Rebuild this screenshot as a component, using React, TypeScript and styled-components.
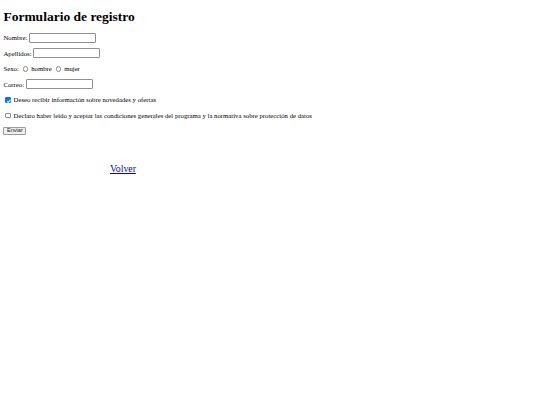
import styled, { createGlobalStyle } from "styled-components";

const GlobalStyle = createGlobalStyle`
  body {
    margin: 0;
    padding: 9px 3.4px;
    font-family: "Liberation Serif", "Times New Roman", serif;
    font-size: 6.75px;
    color: #000;
    background: #fff;
  }
`;

const Title = styled.h1`
  margin: 0 0 9px;
  font-size: 13.5px;
  line-height: 15.6px;
  font-weight: bold;
`;

const Form = styled.form`
  margin: 0;
`;

const Row = styled.div`
  display: flex;
  align-items: center;
  height: 8.75px;
  margin: 0 0 6.75px;
  white-space: pre;
`;

const TextInput = styled.input`
  box-sizing: border-box;
  width: 67px;
  height: 10px;
  margin: 0;
  padding: 0 1px;
  border: 1px solid #8f8f8f;
  border-radius: 1px;
  background: #fff;
  font: 5.6px "Liberation Sans", Arial, sans-serif;
`;

const Radio = styled.input`
  appearance: none;
  box-sizing: border-box;
  flex: none;
  width: 5.6px;
  height: 5.6px;
  margin: 0 1.3px 0 2.1px;
  border: 0.6px solid #8a8a8a;
  border-radius: 50%;
  background: #fff;

  &:checked {
    border: 1.6px solid #0075ff;
  }
`;

const Check = styled.input`
  appearance: none;
  position: relative;
  box-sizing: border-box;
  flex: none;
  width: 5.5px;
  height: 5.5px;
  margin: 0 1.3px 0 1.7px;
  border: 0.6px solid #8a8a8a;
  border-radius: 1px;
  background: #fff;

  &:checked {
    border-color: #0075ff;
    background: #0075ff;
  }

  &:checked::after {
    content: "";
    position: absolute;
    left: 1.5px;
    top: 0.3px;
    width: 1.3px;
    height: 2.6px;
    border: solid #fff;
    border-width: 0 0.9px 0.9px 0;
    transform: rotate(45deg);
  }
`;

const Button = styled.button`
  box-sizing: border-box;
  height: 8.5px;
  padding: 0 2.6px;
  border: 0.8px solid #9a9a9a;
  border-radius: 1px;
  background: #efefef;
  color: #222;
  font: 5.6px/1 "Liberation Sans", Arial, sans-serif;
`;

const Back = styled.div`
  margin-top: 27.5px;
  padding-left: 106.6px;
`;

const BackLink = styled.a`
  font-size: 9.8px;
  line-height: 11.5px;
  color: #0000ee;
`;

export default function App() {
  return (
    <>
      <GlobalStyle />
      <Title>Formulario de registro</Title>
      <Form onSubmit={(e) => e.preventDefault()}>
        <Row>
          {"Nombre: "}
          <TextInput type="text" name="nombre" />
        </Row>
        <Row>
          {"Apellidos: "}
          <TextInput type="text" name="apellidos" />
        </Row>
        <Row>
          {"Sexo: "}
          <Radio type="radio" name="sexo" value="hombre" />
          {" hombre "}
          <Radio type="radio" name="sexo" value="mujer" />
          {" mujer"}
        </Row>
        <Row>
          {"Correo: "}
          <TextInput type="email" name="correo" />
        </Row>
        <Row>
          <Check type="checkbox" defaultChecked />
          {" Deseo recibir información sobre novedades y ofertas"}
        </Row>
        <Row>
          <Check type="checkbox" />
          {
            " Declaro haber leído y aceptar las condiciones generales del programa y la normativa sobre protección de datos"
          }
        </Row>
        <Row>
          <Button type="submit">Enviar</Button>
        </Row>
      </Form>
      <Back>
        <BackLink href="#">Volver</BackLink>
      </Back>
    </>
  );
}
